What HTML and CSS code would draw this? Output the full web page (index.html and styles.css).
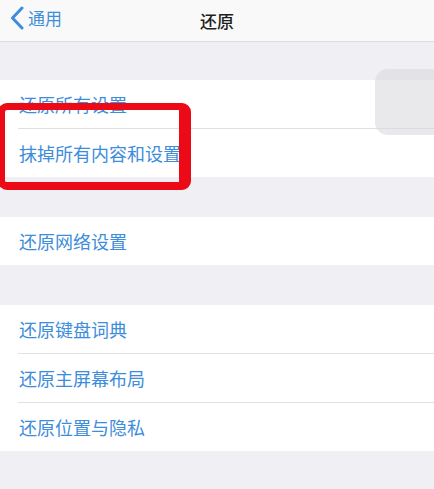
FILE: index.html
```html
<!DOCTYPE html>
<html lang="zh-CN">
<head>
<meta charset="utf-8">
<link rel="stylesheet" href="styles.css">
</head>
<body>
<div class="screen">
  <header class="nav">
    <div class="back">
      <svg class="chev" width="15" height="24" viewBox="0 0 15 24"><path d="M13 2 L3.5 12 L13 22" fill="none" stroke="#3d8ddb" stroke-width="3" stroke-linecap="round" stroke-linejoin="round"/></svg>
      <span>通用</span>
    </div>
    <div class="title">还原</div>
  </header>
  <div class="gap first"></div>
  <section class="group">
    <div class="row">还原所有设置</div>
    <div class="row">抹掉所有内容和设置</div>
  </section>
  <div class="gap"></div>
  <section class="group">
    <div class="row">还原网络设置</div>
  </section>
  <div class="gap"></div>
  <section class="group">
    <div class="row">还原键盘词典</div>
    <div class="row">还原主屏幕布局</div>
    <div class="row">还原位置与隐私</div>
  </section>
  <div class="highlight"></div>
  <div class="assistive"></div>
</div>
</body>
</html>
```
FILE: styles.css
```css
html, body {
  margin: 0;
  padding: 0;
  background: #efeff4;
}
.screen {
  position: relative;
  width: 434px;
  height: 489px;
  overflow: hidden;
  background: #efeff4;
  font-family: "Noto Sans CJK SC", "Noto Sans", sans-serif;
}
.nav {
  height: 41px;
  background: #f9f9f9;
  border-bottom: 1px solid #dcdce0;
  display: flex;
  align-items: center;
  justify-content: center;
  position: relative;
}
.back {
  position: absolute;
  left: 9px;
  top: 6px;
  display: flex;
  align-items: center;
  gap: 4px;
  color: #3d8ddb;
  font-size: 17px;
  line-height: 22px;
}
.chev { display: block; }
.title {
  font-size: 17px;
  font-weight: 500;
  color: #1e1e1e;
  line-height: 22px;
  margin-top: 0;
}
.gap { height: 40px; }
.gap.first { height: 38px; }
.group {
  background: #fff;
}
.row {
  height: 48px;
  margin-left: 18px;
  padding-left: 1px;
  display: flex;
  align-items: center;
  font-size: 18px;
  color: #3d8ddb;
  box-sizing: border-box;
}
.row + .row {
  border-top: 1px solid #e0e0e4;
  height: 49px;
}
.highlight {
  position: absolute;
  left: -2px;
  top: 103px;
  width: 193px;
  height: 87px;
  box-sizing: border-box;
  border-style: solid;
  border-color: #ec0a16;
  border-width: 7px 12px 8px 7px;
  border-radius: 9px;
}
.assistive {
  position: absolute;
  left: 375px;
  top: 69px;
  width: 70px;
  height: 66px;
  border-radius: 13px;
  background: rgba(215, 215, 220, 0.55);
}
```
